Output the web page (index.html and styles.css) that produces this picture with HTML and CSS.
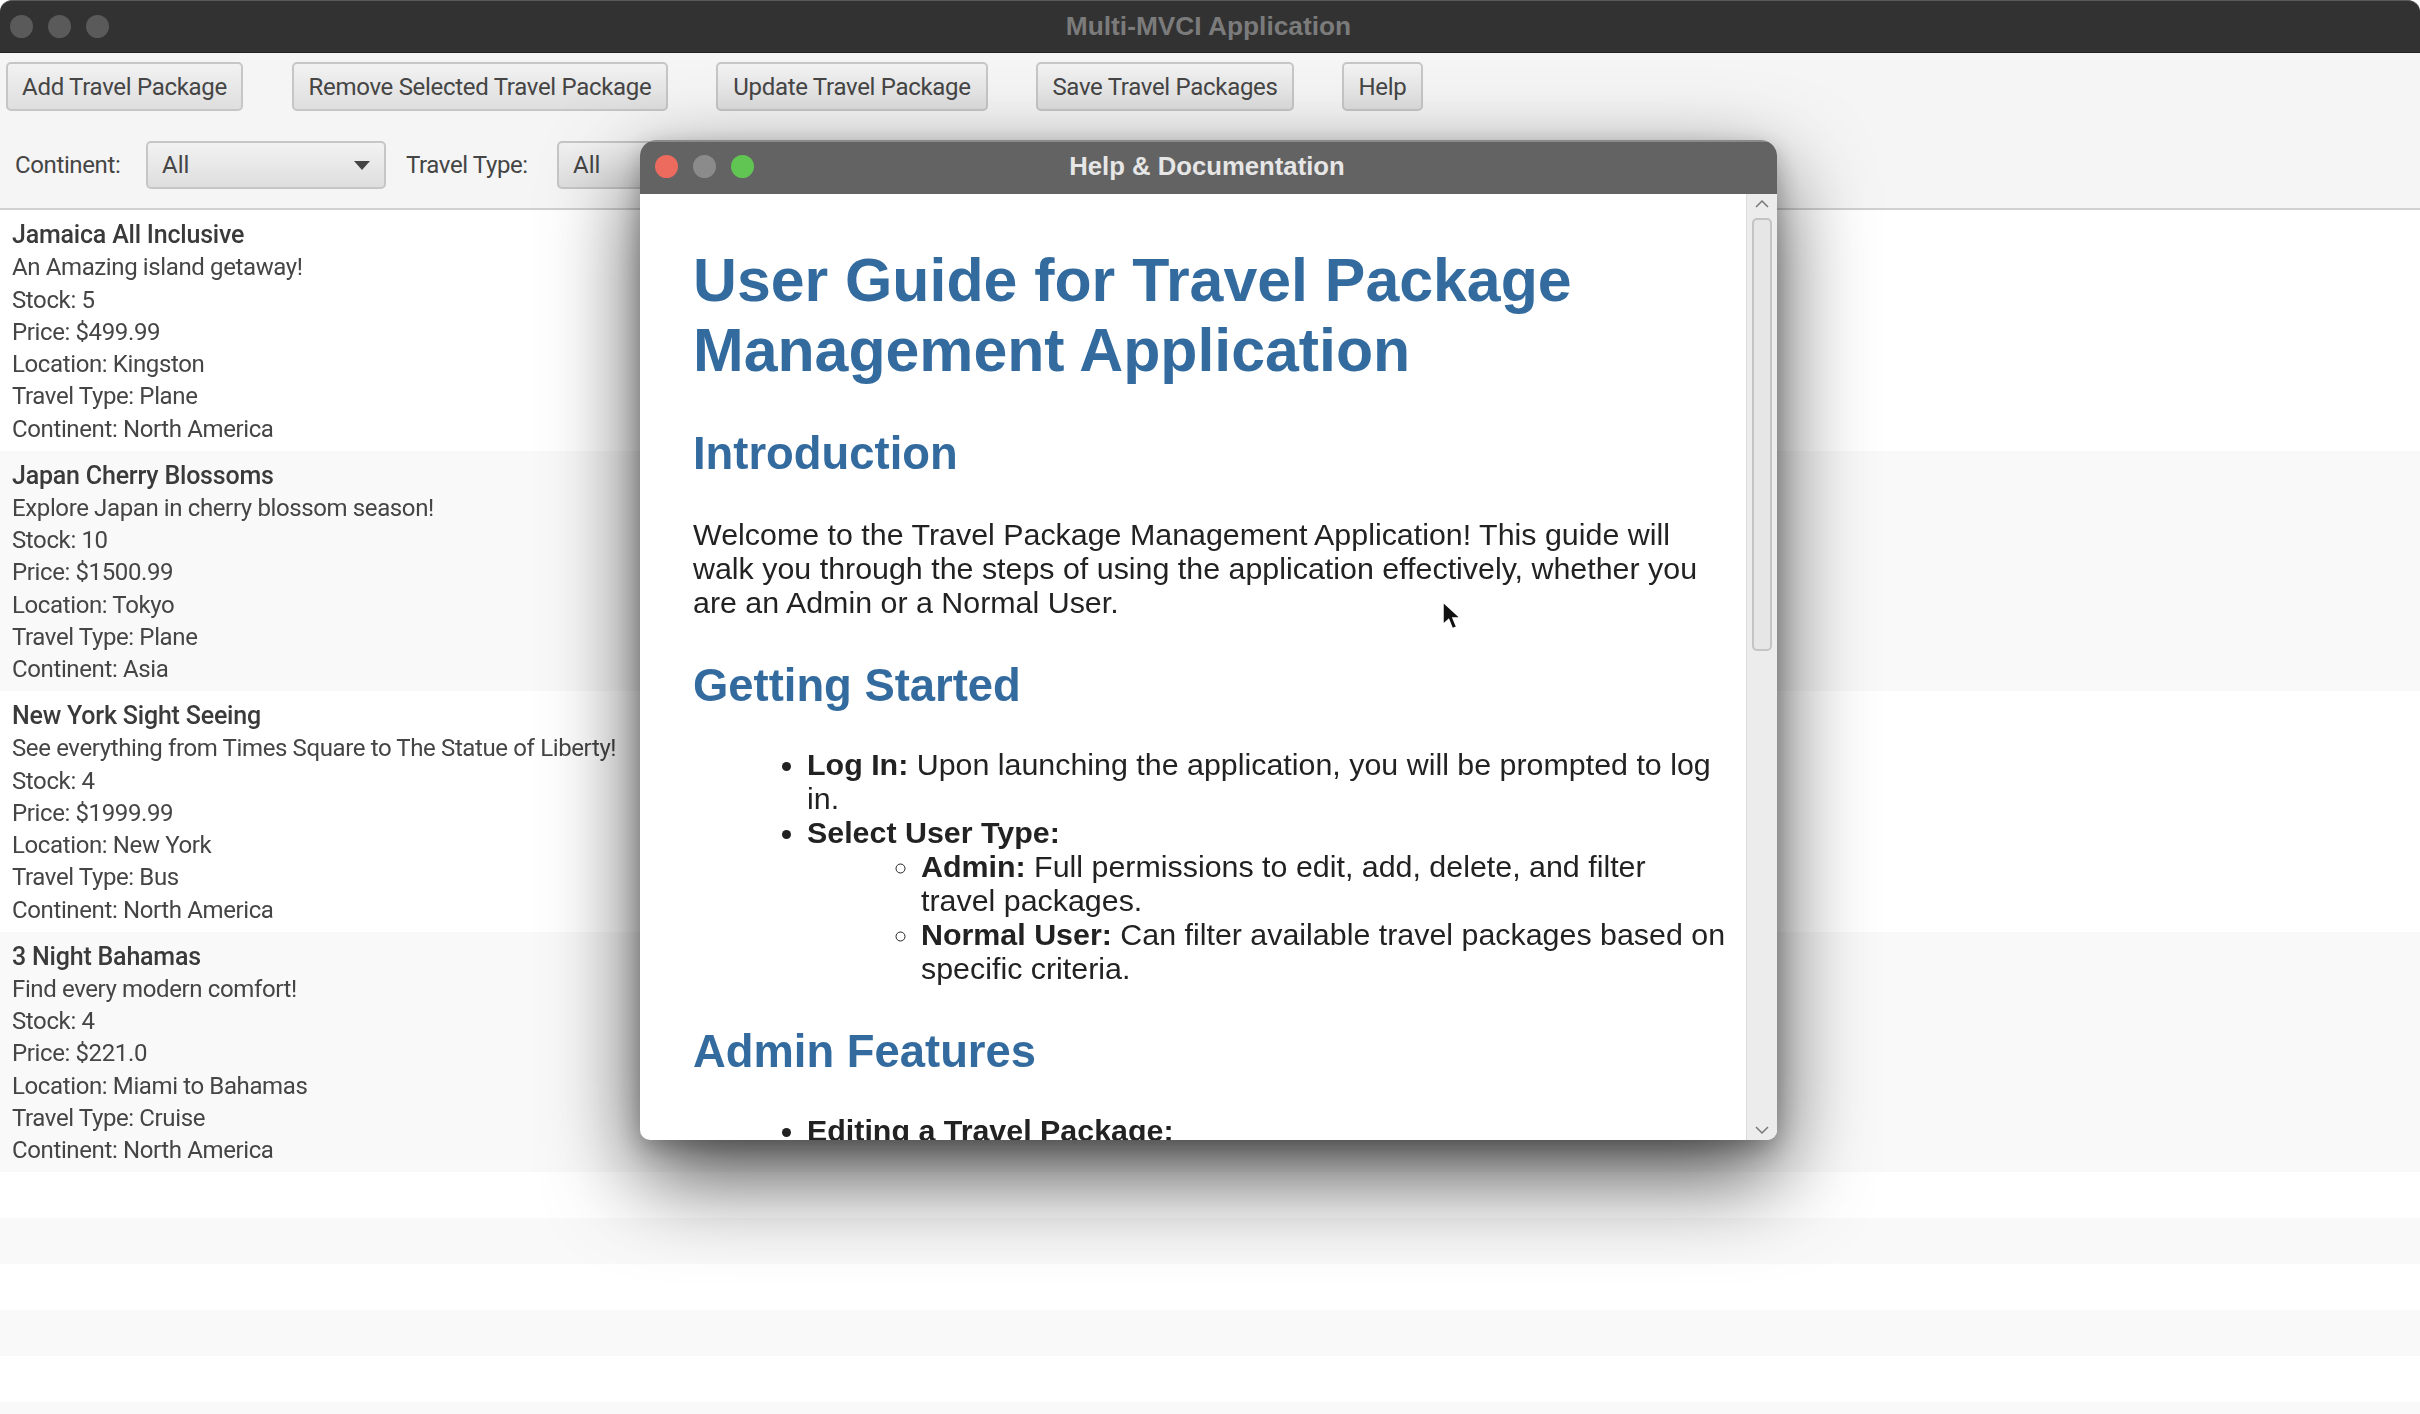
FILE: index.html
```html
<!DOCTYPE html>
<html lang="en">
<head>
    <meta charset="UTF-8">
    <meta name="viewport" content="width=device-width, initial-scale=1.0">
    <title>Multi-MVCI Application</title>
    <link rel="stylesheet" href="styles.css">
</head>
<body>
    <div class="app">
        <div class="titlebar">
            <div class="lights">
                <span class="light"></span>
                <span class="light"></span>
                <span class="light"></span>
            </div>
            <span class="titlebar-text">Multi-MVCI Application</span>
        </div>

        <div class="toolbar">
            <button class="btn btn-add">Add Travel Package</button>
            <button class="btn btn-remove">Remove Selected Travel Package</button>
            <button class="btn btn-update">Update Travel Package</button>
            <button class="btn btn-save">Save Travel Packages</button>
            <button class="btn btn-help">Help</button>
        </div>

        <div class="filters">
            <span class="filter-label filter-label-continent">Continent:</span>
            <div class="combo combo-continent">All<span class="combo-arrow"></span></div>
            <span class="filter-label filter-label-type">Travel Type:</span>
            <div class="combo combo-type">All</div>
        </div>

        <div class="packages">
            <div class="row">
                <div class="row-name">Jamaica All Inclusive</div>
                <div>An Amazing island getaway!</div>
                <div>Stock: 5</div>
                <div>Price: $499.99</div>
                <div>Location: Kingston</div>
                <div>Travel Type: Plane</div>
                <div>Continent: North America</div>
            </div>
            <div class="row row-alt">
                <div class="row-name">Japan Cherry Blossoms</div>
                <div>Explore Japan in cherry blossom season!</div>
                <div>Stock: 10</div>
                <div>Price: $1500.99</div>
                <div>Location: Tokyo</div>
                <div>Travel Type: Plane</div>
                <div>Continent: Asia</div>
            </div>
            <div class="row">
                <div class="row-name">New York Sight Seeing</div>
                <div>See everything from Times Square to The Statue of Liberty!</div>
                <div>Stock: 4</div>
                <div>Price: $1999.99</div>
                <div>Location: New York</div>
                <div>Travel Type: Bus</div>
                <div>Continent: North America</div>
            </div>
            <div class="row row-alt">
                <div class="row-name">3 Night Bahamas</div>
                <div>Find every modern comfort!</div>
                <div>Stock: 4</div>
                <div>Price: $221.0</div>
                <div>Location: Miami to Bahamas</div>
                <div>Travel Type: Cruise</div>
                <div>Continent: North America</div>
            </div>
            <div class="row-empty"></div>
            <div class="row-empty row-alt"></div>
            <div class="row-empty"></div>
            <div class="row-empty row-alt"></div>
            <div class="row-empty"></div>
            <div class="row-empty row-alt"></div>
        </div>
    </div>

    <div class="help-window">
        <div class="help-titlebar">
            <div class="lights">
                <span class="light light-red"></span>
                <span class="light light-grey"></span>
                <span class="light light-green"></span>
            </div>
            <span class="help-title">Help &amp; Documentation</span>
        </div>
        <div class="help-body">
            <div class="doc">
                <h1>User Guide for Travel Package Management Application</h1>
                <h2>Introduction</h2>
                <p>Welcome to the Travel Package Management Application! This guide will walk you through the steps of using the application effectively, whether you are an Admin or a Normal User.</p>
                <h2>Getting Started</h2>
                <ul>
                    <li><b>Log In:</b> Upon launching the application, you will be prompted to log in.</li>
                    <li><b>Select User Type:</b>
                        <ul>
                            <li><b>Admin:</b> Full permissions to edit, add, delete, and filter travel packages.</li>
                            <li><b>Normal User:</b> Can filter available travel packages based on specific criteria.</li>
                        </ul>
                    </li>
                </ul>
                <h2>Admin Features</h2>
                <ul>
                    <li><b>Editing a Travel Package:</b></li>
                </ul>
            </div>
            <div class="scrollbar">
                <svg class="scroll-arrow" width="14" height="9" viewBox="0 0 14 9"><path d="M1 8 7 2l6 6" fill="none" stroke="#777" stroke-width="1.5"/></svg>
                <div class="scroll-track"><div class="scroll-thumb"></div></div>
                <svg class="scroll-arrow" width="14" height="9" viewBox="0 0 14 9"><path d="M1 1l6 6 6-6" fill="none" stroke="#777" stroke-width="1.5"/></svg>
            </div>
        </div>
    </div>

    <svg class="cursor" width="21" height="32" viewBox="0 0 22 34"><path d="M2 1v24l6-5.500 4 10 4.500-2-4-9.500h8z" fill="#111" stroke="#fff" stroke-width="1.500"/></svg>
</body>
</html>
```

FILE: styles.css
```css
:root {
    --row-alt: #f9f9f9;
    --text-color: #454545;
    --doc-blue: #336b9f;
}
html, body {
    margin: 0;
    padding: 0;
    height: 100%;
    overflow: hidden;
}
body {
    font-family: Roboto, 'Liberation Sans', sans-serif;
    color: var(--text-color);
    background-color: white;
}
/* the reference is a video frame, everything in it is a little soft */
.app, .help-window, .cursor {
    filter: blur(0.6px);
}
.app {
    height: 1414px;
    display: flex;
    flex-direction: column;
}
.titlebar {
    height: 53px;
    flex: none;
    background-color: #323232;
    border-top: 1px solid #5a5a5a;
    box-sizing: border-box;
    border-bottom: 1px solid #222;
    padding-right: 3px;
    display: flex;
    align-items: center;
    justify-content: center;
    position: relative;
    border-radius: 12px 12px 0 0;
}
.titlebar-text {
    font-family: 'Liberation Sans', sans-serif;
    font-weight: bold;
    font-size: 26.300px;
    color: #7b7b7b;
}
.lights {
    position: absolute;
    left: 10px;
    top: 0;
    bottom: 0;
    display: flex;
    align-items: center;
    gap: 15px;
}
.light {
    width: 23px;
    height: 23px;
    border-radius: 50%;
    background-color: #5a5a5a;
}
.light-red { background-color: #ed6a5e; }
.light-grey { background-color: #8b8b8b; }
.light-green { background-color: #61c554; }

.toolbar {
    height: 76px;
    flex: none;
    box-sizing: border-box;
    padding: 9px 0 0 6px;
    display: flex;
    align-items: flex-start;
    background-color: #f5f5f5;
}
.btn {
    height: 49px;
    box-sizing: border-box;
    padding: 0;
    font-family: inherit;
    font-size: 24px;
    letter-spacing: -0.3px;
    color: var(--text-color);
    border: 2px solid #c6c6c6;
    border-radius: 5px;
    background: linear-gradient(#f2f2f2, #dedede);
}
.btn-add { width: 237px; margin-right: 49px; }
.btn-remove { width: 376px; margin-right: 48px; }
.btn-update { width: 272px; margin-right: 48px; }
.btn-save { width: 258px; margin-right: 48px; }
.btn-help { width: 81px; }

.filters {
    height: 81px;
    flex: none;
    box-sizing: border-box;
    padding: 12px 0 0 15px;
    display: flex;
    align-items: flex-start;
    background-color: #f5f5f5;
    border-bottom: 2px solid #d0d0d0;
}
.filter-label {
    line-height: 48px;
    font-size: 24px;
    letter-spacing: -0.38px;
}
.filter-label-continent { width: 131px; }
.filter-label-type { width: 151px; margin-left: 20px; }
.combo {
    height: 48px;
    box-sizing: border-box;
    line-height: 44px;
    font-size: 24px;
    padding-left: 14px;
    border: 2px solid #c6c6c6;
    border-radius: 5px;
    background: linear-gradient(#f2f2f2, #dedede);
    position: relative;
}
.combo-continent { width: 240px; }
.combo-type { width: 200px; }
.combo-arrow {
    position: absolute;
    right: 14px;
    top: 18px;
    border-left: 8px solid transparent;
    border-right: 8px solid transparent;
    border-top: 9px solid #444;
}

.packages {
    flex: 1;
    overflow: hidden;
}
.row {
    height: 240.500px;
    box-sizing: border-box;
    padding: 9px 12px 0;
    font-size: 24px;
    letter-spacing: -0.38px;
    line-height: 32.300px;
}
.row-name { font-size: 25px; font-weight: 500; letter-spacing: -0.2px; color: #3a3a3a; }
.row-alt { background-color: var(--row-alt); }
.row-empty { height: 46px; }

.help-window {
    position: absolute;
    left: 640px;
    top: 140px;
    width: 1137px;
    height: 1000px;
    border-radius: 16px 16px 10px 10px;
    overflow: hidden;
    display: flex;
    flex-direction: column;
    background-color: white;
    box-shadow: 0 36px 90px rgba(0, 0, 0, 0.7), 0 8px 24px rgba(0, 0, 0, 0.25);
}
.help-titlebar {
    height: 54px;
    flex: none;
    background-color: #636363;
    border-top: 2px solid #8a8a8a;
    box-sizing: border-box;
    padding: 0 3px 4px 0;
    display: flex;
    align-items: center;
    justify-content: center;
    position: relative;
}
.help-title {
    font-family: 'Liberation Sans', sans-serif;
    font-weight: bold;
    font-size: 25.700px;
    color: #e6e6e6;
}
.help-titlebar .lights { left: 15px; gap: 15px; bottom: 4px; }
.help-body {
    flex: 1;
    min-height: 0;
    display: flex;
}
.doc {
    flex: 1;
    min-width: 0;
    overflow: hidden;
    box-sizing: border-box;
    padding: 0 19px 0 53px;
    font-family: 'Liberation Sans', sans-serif;
    font-size: 30.400px;
    line-height: 34px;
    color: #222;
}
.doc h1 {
    font-size: 60.800px;
    line-height: 70px;
    color: var(--doc-blue);
    margin: 51px 0 0;
}
.doc h2 {
    font-size: 45.400px;
    line-height: 52px;
    color: var(--doc-blue);
    margin: 41px 0 0;
}
.doc h1 + h2 {
    margin-top: 43px;
}
.doc p {
    margin: 36.500px 0 0;
}
.doc ul {
    margin: 35px 0 0;
    padding-left: 114px;
}
.doc ul ul {
    margin: 0;
}
.scrollbar {
    width: 31px;
    flex: none;
    background-color: #ececec;
    border-left: 1px solid #dcdcdc;
    box-sizing: border-box;
    display: flex;
    flex-direction: column;
    align-items: center;
    padding: 5px 0;
}
.scroll-track {
    flex: 1;
    width: 100%;
    padding-top: 10px;
}
.scroll-thumb {
    width: 20px;
    height: 433px;
    margin: 0 auto;
    box-sizing: border-box;
    background-color: #e6e6e6;
    border: 2px solid #c4c4c4;
    border-radius: 5px;
}

.cursor {
    position: absolute;
    left: 1441px;
    top: 601px;
}
```
